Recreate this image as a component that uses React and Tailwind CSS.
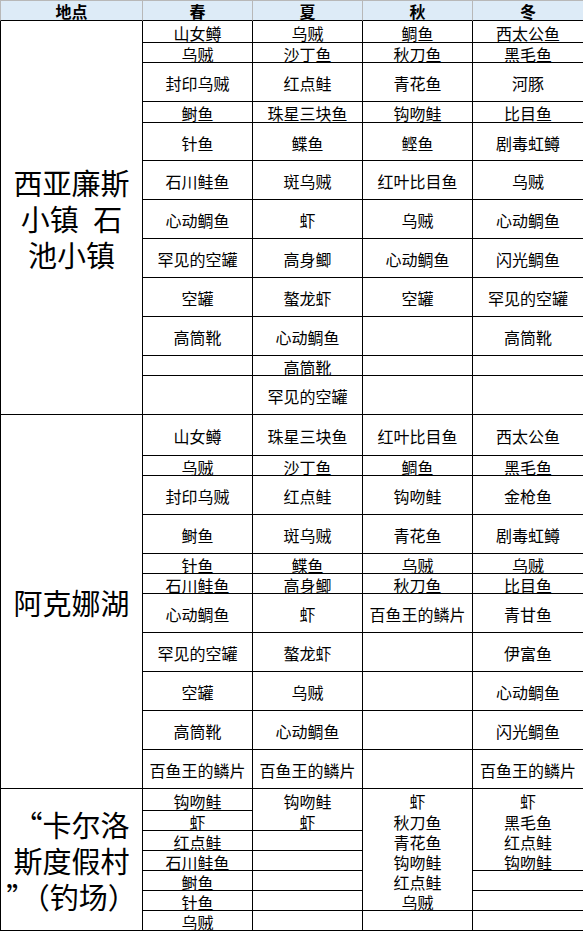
const font = { fontFamily: '"Noto Sans CJK SC", sans-serif' };

const header = ["地点", "春", "夏", "秋", "冬"];

// each row: [height class, [春, 夏, 秋, 冬], columns without bottom line]
const sections = [
  {
    place: ["西亚廉斯", "小镇\u2002石", "池小镇"],
    rows: [
      ["h-[22px]", ["山女鳟", "乌贼", "鲷鱼", "西太公鱼"]],
      ["h-[20px]", ["乌贼", "沙丁鱼", "秋刀鱼", "黑毛鱼"]],
      ["h-[39px]", ["封印乌贼", "红点鲑", "青花鱼", "河豚"]],
      ["h-[21px]", ["鲥鱼", "珠星三块鱼", "钩吻鲑", "比目鱼"]],
      ["h-[38px]", ["针鱼", "鲽鱼", "鲣鱼", "剧毒虹鳟"]],
      ["h-[39px]", ["石川鲑鱼", "斑乌贼", "红叶比目鱼", "乌贼"]],
      ["h-[39px]", ["心动鲷鱼", "虾", "乌贼", "心动鲷鱼"]],
      ["h-[39px]", ["罕见的空罐", "高身鲫", "心动鲷鱼", "闪光鲷鱼"]],
      ["h-[39px]", ["空罐", "螯龙虾", "空罐", "罕见的空罐"]],
      ["h-[39px]", ["高筒靴", "心动鲷鱼", "", "高筒靴"]],
      ["h-[20px]", ["", "高筒靴", "", ""]],
      ["h-[39px]", ["", "罕见的空罐", "", ""]],
    ],
  },
  {
    place: ["阿克娜湖"],
    rows: [
      ["h-[41px]", ["山女鳟", "珠星三块鱼", "红叶比目鱼", "西太公鱼"]],
      ["h-[20px]", ["乌贼", "沙丁鱼", "鲷鱼", "黑毛鱼"]],
      ["h-[39px]", ["封印乌贼", "红点鲑", "钩吻鲑", "金枪鱼"]],
      ["h-[39px]", ["鲥鱼", "斑乌贼", "青花鱼", "剧毒虹鳟"]],
      ["h-[20px]", ["针鱼", "鲽鱼", "乌贼", "乌贼"]],
      ["h-[20px]", ["石川鲑鱼", "高身鲫", "秋刀鱼", "比目鱼"]],
      ["h-[39px]", ["心动鲷鱼", "虾", "百鱼王的鳞片", "青甘鱼"]],
      ["h-[39px]", ["罕见的空罐", "螯龙虾", "", "伊富鱼"]],
      ["h-[39px]", ["空罐", "乌贼", "", "心动鲷鱼"]],
      ["h-[39px]", ["高筒靴", "心动鲷鱼", "", "闪光鲷鱼"]],
      ["h-[39px]", ["百鱼王的鳞片", "百鱼王的鳞片", "", "百鱼王的鳞片"]],
    ],
  },
  {
    place: ["“卡尔洛", "斯度假村", "”（钓场）"],
    rows: [
      ["h-[22px]", ["钩吻鲑", "钩吻鲑", "虾", "虾"], [1, 2, 3]],
      ["h-[20px]", ["虾", "虾", "秋刀鱼", "黑毛鱼"], [2, 3]],
      ["h-[20px]", ["红点鲑", "", "青花鱼", "红点鲑"], [2, 3]],
      ["h-[20px]", ["石川鲑鱼", "", "钩吻鲑", "钩吻鲑"], [2]],
      ["h-[20px]", ["鲥鱼", "", "红点鲑", ""], [2]],
      ["h-[20px]", ["针鱼", "", "乌贼", ""]],
      ["h-[20px]", ["乌贼", "", "", ""]],
    ],
  },
];

function Cell({ h, text, col, open }) {
  return (
    <div
      className={`${h} flex items-center justify-center pt-[2px] text-[16px] leading-none text-black whitespace-nowrap ${
        open ? "" : "border-b border-black"
      } ${col < 3 ? "border-r border-black" : ""}`}
    >
      {text}
    </div>
  );
}

export default function App() {
  return (
    <div className="w-[583px] bg-white overflow-hidden" style={font}>
      <div className="grid grid-cols-[143px_110px_110px_110px_110px] h-[21px]">
        {header.map((t, i) => (
          <div
            key={t}
            className={`flex items-center justify-center bg-[#DDEBF7] border-t border-[#b8b8b8] border-b-black border-b text-[16px] font-bold leading-none text-black ${
              i === 0 ? "border-l" : ""
            } ${i < 4 ? "border-r" : ""}`}
          >
            {t}
          </div>
        ))}
      </div>
      {sections.map((s, si) => (
        <div key={si} className="flex">
          <div className="w-[143px] shrink-0 flex flex-col items-center justify-center border-l border-r border-b border-black text-[29px] leading-[36px] text-black whitespace-nowrap">
            {s.place.map((line) => (
              <span key={line}>{line}</span>
            ))}
          </div>
          <div className="grid grid-cols-4 w-[440px]">
            {s.rows.map(([h, cells, open = []], ri) =>
              cells.map((text, ci) => (
                <Cell
                  key={ri + "-" + ci}
                  h={h}
                  text={text}
                  col={ci}
                  open={open.includes(ci)}
                />
              ))
            )}
          </div>
        </div>
      ))}
    </div>
  );
}
